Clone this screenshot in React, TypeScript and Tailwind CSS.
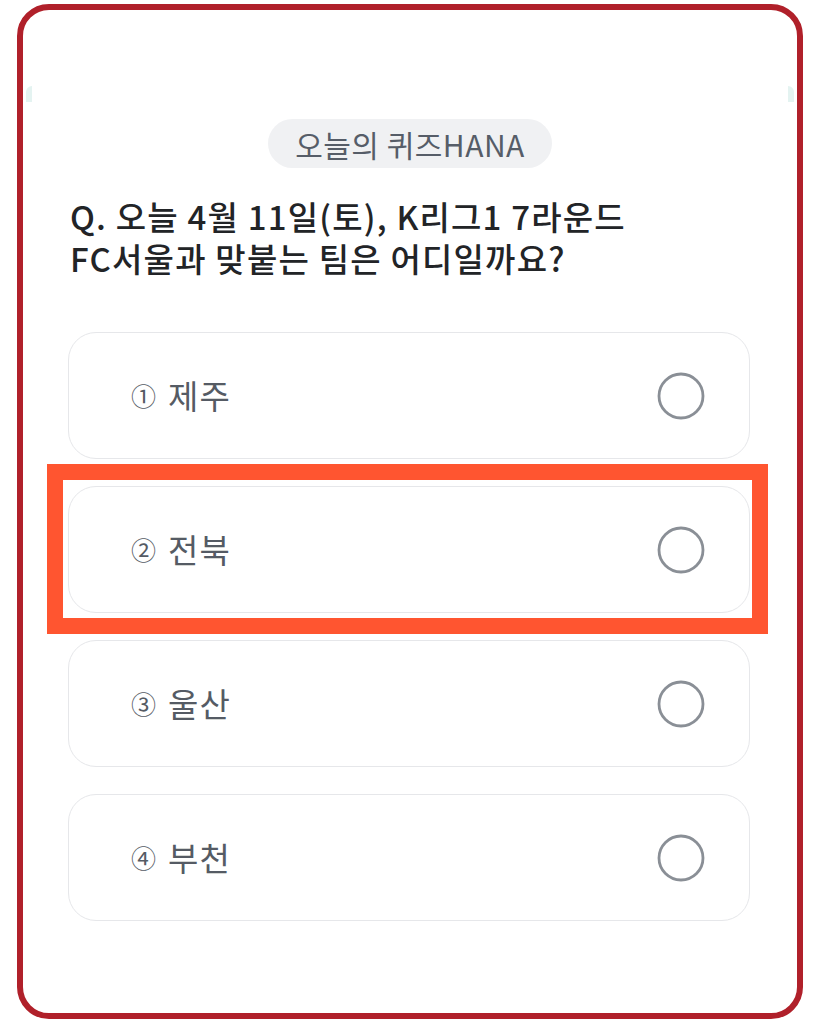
const options = [
  { no: "①", label: "제주" },
  { no: "②", label: "전북", highlighted: true },
  { no: "③", label: "울산" },
  { no: "④", label: "부천" },
]

function RadioCircle() {
  return (
    <svg width="48" height="48" viewBox="0 0 48 48" className="shrink-0">
      <circle cx="24" cy="24" r="22" fill="none" stroke="#8a8f96" strokeWidth="2.8" />
    </svg>
  )
}

function OptionCard({ no, label, highlighted }: { no: string; label: string; highlighted?: boolean }) {
  return (
    <div className="relative">
      {highlighted && (
        <div className="absolute -top-[22px] -left-[21px] -right-[18px] -bottom-[21px] border-[16px] border-[#ff5530] pointer-events-none" />
      )}
      <div className="flex h-[127px] items-center justify-between rounded-[28px] border border-[#e6e7ea] bg-white pl-[62px] pr-[44px]">
        <span className="flex items-center gap-[12px] text-[33px] tracking-[1px] text-[#555b64]">
          <span className="text-[25px] tracking-normal">{no}</span>
          <span>{label}</span>
        </span>
        <RadioCircle />
      </div>
    </div>
  )
}

export default function App() {
  return (
    <div
      className="h-[1024px] w-[819px] bg-white pl-[17px] pt-[4px]"
      style={{ fontFamily: '"Noto Sans CJK KR", "Noto Sans", sans-serif' }}
    >
      <div className="relative h-[1015px] w-[786px] rounded-[32px] border-[6px] border-[#b0202a] bg-white">
        {/* faint edge of the card behind */}
        <div className="absolute left-[3px] top-[76px] h-[16px] w-[6px] rounded-tl-[6px] bg-[#e4f3f1]" />
        <div className="absolute right-[3px] top-[76px] h-[16px] w-[6px] rounded-tr-[6px] bg-[#e4f3f1]" />

        <div className="flex flex-col pt-[109px]">
          {/* Badge */}
          <div className="flex justify-center">
            <span className="flex h-[49px] items-center rounded-full bg-[#f0f1f3] px-[27px] text-[30px] leading-none tracking-[0.5px] text-[#565d68]">
              오늘의 퀴즈HANA
            </span>
          </div>

          {/* Question */}
          <h1 className="mt-[27px] pl-[47px] text-[33px] font-medium leading-[42px] tracking-[1.2px] text-[#222427]">
            Q. 오늘 4월 11일(토), K리그1 7라운드
            <br />
            FC서울과 맞붙는 팀은 어디일까요?
          </h1>

          {/* Options */}
          <div className="mt-[53px] flex flex-col gap-[27px] pl-[45px] pr-[47px]">
            {options.map((o) => (
              <OptionCard key={o.no} {...o} />
            ))}
          </div>
        </div>
      </div>
    </div>
  )
}
